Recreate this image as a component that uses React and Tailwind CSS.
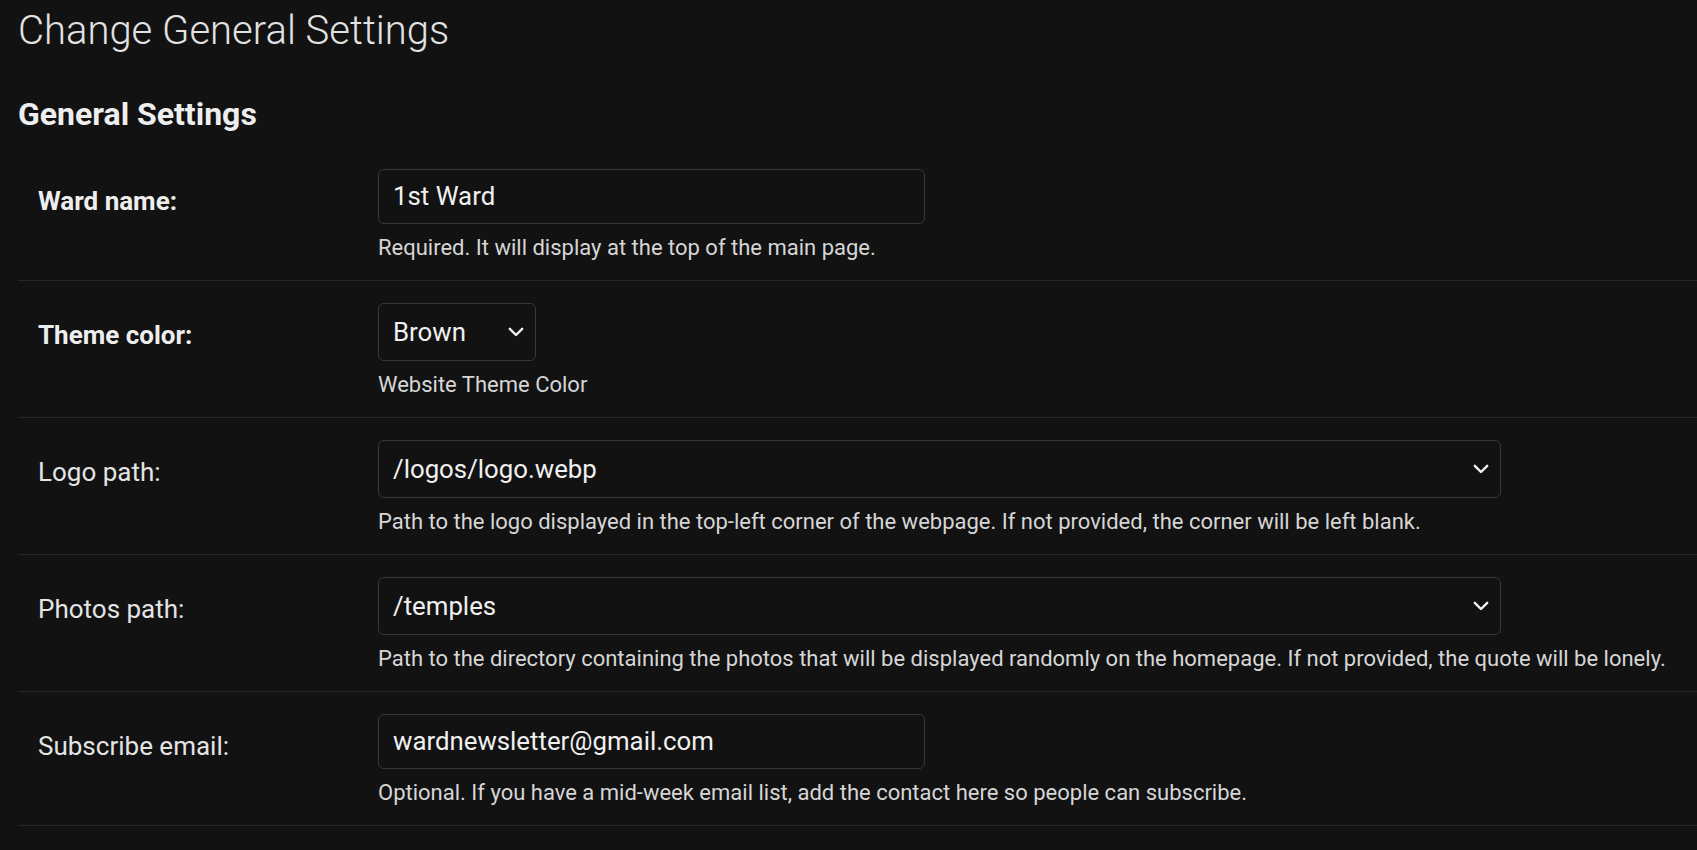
import React from "react";

function Chevron() {
  return (
    <svg width="16" height="10" viewBox="0 0 16 10" fill="none" className="shrink-0">
      <polyline points="1.8,1.8 8,8 14.2,1.8" stroke="#f2f2f2" strokeWidth="2.4" strokeLinecap="round" strokeLinejoin="round" />
    </svg>
  );
}

function Row({ label, bold, children, help }) {
  return (
    <div className="flex border-b border-[#272727] pt-[22px] pb-[18px]">
      <div className="w-[360px] shrink-0 pl-[20px]">
        <div
          className={
            "mt-[17px] text-[26px] leading-[30px] " +
            (bold ? "font-bold text-[#eeeeee]" : "font-normal text-[#e4e4e4]")
          }
        >
          {label}
        </div>
      </div>
      <div className="flex flex-col items-start">
        {children}
        <div className="mt-[10px] whitespace-nowrap text-[22px] leading-[28px] text-[#d6d6d6]">{help}</div>
      </div>
    </div>
  );
}

function Input({ value, width }) {
  return (
    <div
      className="flex h-[55px] items-center rounded-[6px] border border-[#383838] bg-[#121212] pl-[14px] text-[25.8px] text-[#f0f0f0]"
      style={{ width }}
    >
      {value}
    </div>
  );
}

function Select({ value, width }) {
  return (
    <div
      className="flex h-[58px] items-center justify-between rounded-[6px] border border-[#383838] bg-[#121212] pl-[14px] pr-[11px] text-[25.8px] text-[#f0f0f0]"
      style={{ width }}
    >
      <span>{value}</span>
      <Chevron />
    </div>
  );
}

export default function App() {
  return (
    <div className="min-h-[850px] w-full bg-[#121212] pl-[18px] pt-[7px]" style={{ fontFamily: "Roboto, 'Noto Sans', sans-serif" }}>
      <h1 className="text-[40px] font-light leading-[48px] text-[#e2e2e2]">Change General Settings</h1>
      <h2 className="mt-[40px] text-[32px] font-bold leading-[38px] text-[#eeeeee]">General Settings</h2>
      <div className="mt-[14px]">
        <Row label="Ward name:" bold help="Required. It will display at the top of the main page.">
          <Input value="1st Ward" width={547} />
        </Row>
        <Row label="Theme color:" bold help="Website Theme Color">
          <Select value="Brown" width={158} />
        </Row>
        <Row
          label="Logo path:"
          help="Path to the logo displayed in the top-left corner of the webpage. If not provided, the corner will be left blank."
        >
          <Select value="/logos/logo.webp" width={1123} />
        </Row>
        <Row
          label="Photos path:"
          help="Path to the directory containing the photos that will be displayed randomly on the homepage. If not provided, the quote will be lonely."
        >
          <Select value="/temples" width={1123} />
        </Row>
        <Row
          label="Subscribe email:"
          help="Optional. If you have a mid-week email list, add the contact here so people can subscribe."
        >
          <Input value="wardnewsletter@gmail.com" width={547} />
        </Row>
      </div>
    </div>
  );
}
